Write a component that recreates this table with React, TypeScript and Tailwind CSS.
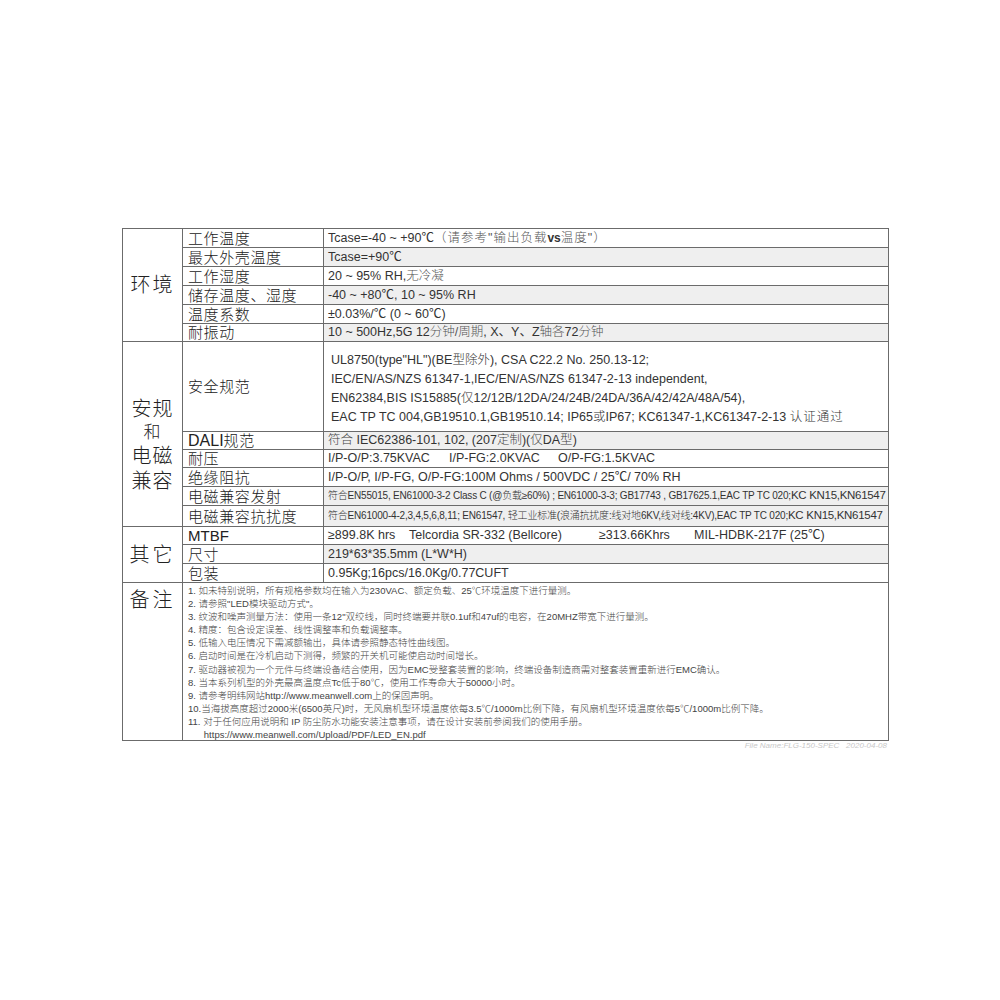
import React from "react";

const B = "border-[#6b6b6b]";

type RowProps = {
  label: React.ReactNode;
  children: React.ReactNode;
  gray?: boolean;
  h?: string;
  labelClass?: string;
};

function Row({ label, children, gray, h = "h-[19px]", labelClass = "" }: RowProps) {
  return (
    <div className={`flex ${h} border-b ${B}`}>
      <div
        className={`w-[141px] shrink-0 border-r ${B} flex items-center pl-[5px] text-[15px] leading-none text-[#222] font-light tracking-[0.6px] ${labelClass}`}
      >
        {label}
      </div>
      <div
        className={`flex-1 min-w-0 flex items-center pl-[4px] text-[12.5px] leading-none text-[#333] whitespace-nowrap overflow-hidden ${
          gray ? "bg-[#efefef]" : "bg-white"
        }`}
      >
        {children}
      </div>
    </div>
  );
}

function Section({
  title,
  children,
  titleClass = "items-center",
}: {
  title: React.ReactNode;
  children: React.ReactNode;
  titleClass?: string;
}) {
  return (
    <div className="flex">
      <div
        className={`w-[60px] shrink-0 border-r border-b ${B} flex justify-center text-[20px] text-[#222] font-light ${titleClass}`}
      >
        {title}
      </div>
      <div className="flex-1 flex flex-col min-w-0">{children}</div>
    </div>
  );
}

const notes = [
  "1. 如未特别说明，所有规格参数均在输入为230VAC、额定负载、25℃环境温度下进行量测。",
  "2. 请参照\"LED模块驱动方式\"。",
  "3. 纹波和噪声测量方法：使用一条12\"双绞线，同时终端要并联0.1uf和47uf的电容，在20MHZ带宽下进行量测。",
  "4. 精度：包含设定误差、线性调整率和负载调整率。",
  "5. 低输入电压情况下需减额输出，具体请参照静态特性曲线图。",
  "6. 启动时间是在冷机启动下测得，频繁的开关机可能使启动时间增长。",
  "7. 驱动器被视为一个元件与终端设备结合使用，因为EMC受整套装置的影响，终端设备制造商需对整套装置重新进行EMC确认。",
  "8. 当本系列机型的外壳最高温度点Tc低于80℃，使用工作寿命大于50000小时。",
  "9. 请参考明纬网站http://www.meanwell.com上的保固声明。",
  "10.当海拔高度超过2000米(6500英尺)时，无风扇机型环境温度依每3.5℃/1000m比例下降，有风扇机型环境温度依每5℃/1000m比例下降。",
  "11. 对于任何应用说明和 IP 防尘防水功能安装注意事项，请在设计安装前参阅我们的使用手册。",
  "      https://www.meanwell.com/Upload/PDF/LED_EN.pdf",
];

export default function App() {
  return (
    <div className="min-h-[1000px] bg-white pt-[228px] pl-[122px] font-['Liberation_Sans','Noto_Sans_CJK_SC',sans-serif]">
      <div className={`w-[767px] border-t border-l border-r ${B} bg-white`}>
        <Section title={<span className="tracking-[2px]">环境</span>}>
          <Row label="工作温度">
            Tcase=-40 ~ +90℃<span className="font-light text-[#555] tracking-[1px]">（请参考"输出负载</span>
            <span className="font-bold text-[12px]">vs</span>
            <span className="font-light text-[#555] tracking-[1px]">温度"）</span>
          </Row>
          <Row label="最大外壳温度" gray>
            Tcase=+90℃
          </Row>
          <Row label="工作湿度">
            20 ~ 95% RH,<span className="font-light text-[#555]">无冷凝</span>
          </Row>
          <Row label="储存温度、湿度" gray>
            -40 ~ +80℃, 10 ~ 95% RH
          </Row>
          <Row label="温度系数">±0.03%/℃ (0 ~ 60℃)</Row>
          <Row label="耐振动" gray h="h-[18px]">
            10 ~ 500Hz,5G 12<span className="font-light text-[#555]">分钟/周期</span>, X、Y、Z<span className="font-light text-[#555]">轴各</span>72<span className="font-light text-[#555]">分钟</span>
          </Row>
        </Section>

        <Section
          title={
            <div className="flex flex-col items-center leading-[25px] tracking-[1px] pt-[55px]">
              <span>安规</span>
              <span className="text-[17px] leading-[22px]">和</span>
              <span>电磁</span>
              <span>兼容</span>
            </div>
          }
          titleClass="items-start"
        >
          <div className={`flex h-[90px] border-b ${B}`}>
            <div
              className={`w-[141px] shrink-0 border-r ${B} flex items-center pl-[5px] text-[15px] leading-none text-[#222] font-light tracking-[0.6px]`}
            >
              安全规范
            </div>
            <div className="flex-1 flex flex-col justify-center pl-[7px] text-[12.5px] leading-[19px] text-[#333] whitespace-nowrap pt-[4px]">
              <div>
                UL8750(type"HL")(BE<span className="font-light">型除外</span>), CSA C22.2 No. 250.13-12;
              </div>
              <div>IEC/EN/AS/NZS 61347-1,IEC/EN/AS/NZS 61347-2-13 independent,</div>
              <div>
                EN62384,BIS IS15885(<span className="font-light">仅</span>12/12B/12DA/24/24B/24DA/36A/42/42A/48A/54),
              </div>
              <div>
                EAC TP TC 004,GB19510.1,GB19510.14; IP65<span className="font-light">或</span>IP67; KC61347-1,KC61347-2-13{" "}
                <span className="font-light tracking-[1px]">认证通过</span>
              </div>
            </div>
          </div>
          <Row
            label={
              <>
                <span className="text-[16px] tracking-normal font-normal">DALI</span>规范
              </>
            }
            gray
            h="h-[18px]"
          >
            <span className="font-light text-[#444]">符合</span>&nbsp;IEC62386-101, 102, (207
            <span className="font-light text-[#444]">定制</span>)(<span className="font-light text-[#444]">仅</span>DA
            <span className="font-light text-[#444]">型</span>)
          </Row>
          <Row label="耐压" h="h-[18px]">
            <span className="w-[121px]">I/P-O/P:3.75KVAC</span>
            <span className="w-[109px]">I/P-FG:2.0KVAC</span>
            <span>O/P-FG:1.5KVAC</span>
          </Row>
          <Row label="绝缘阻抗">I/P-O/P, I/P-FG, O/P-FG:100M Ohms / 500VDC / 25℃/ 70% RH</Row>
          <Row label="电磁兼容发射" gray>
            <span className="text-[10px] tracking-[-0.2px]">
              <span className="font-light">符合</span>EN55015, EN61000-3-2 Class C (@<span className="font-light">负载</span>≥60%) ; EN61000-3-3; GB17743 , GB17625.1,EAC TP TC 020;
              <span className="text-[11.5px] tracking-[-0.3px]">KC KN15,KN61547</span>
            </span>
          </Row>
          <Row label="电磁兼容抗扰度" gray h="h-[21px]">
            <span className="text-[10px] tracking-[-0.2px]">
              <span className="font-light">符合</span>EN61000-4-2,3,4,5,6,8,11; EN61547,{" "}
              <span className="font-light">轻工业标准(浪涌抗扰度:线对地</span>6KV,<span className="font-light">线对线</span>:4KV),EAC TP TC 020;
              <span className="text-[11.5px] tracking-[-0.3px]">KC KN15,KN61547</span>
            </span>
          </Row>
        </Section>

        <Section title={<span className="tracking-[3px]">其它</span>}>
          <Row label={<span className="tracking-normal font-normal text-[15px]">MTBF</span>} h="h-[18px]">
            <span className="w-[81px]">≥899.8K hrs</span>
            <span className="w-[190px]">Telcordia SR-332 (Bellcore)</span>
            <span className="w-[95px]">≥313.66Khrs</span>
            <span>MIL-HDBK-217F (25℃)</span>
          </Row>
          <Row label="尺寸" gray h="h-[19px]">
            219*63*35.5mm (L*W*H)
          </Row>
          <Row label="包装">0.95Kg;16pcs/16.0Kg/0.77CUFT</Row>
        </Section>

        <Section title={<span className="tracking-[3px] pt-[2px]">备注</span>} titleClass="items-start">
          <div className={`h-[158px] border-b ${B} pl-[5px] pt-[1px] text-[9.5px] leading-[13.1px] text-[#444] whitespace-pre font-light`}>
            {notes.map((n, i) => (
              <div key={i}>{n}</div>
            ))}
          </div>
        </Section>
      </div>
      <div className="w-[767px] text-right pr-[2px] text-[8px] italic text-[#c8c8c8] leading-[9px]">
        File Name:FLG-150-SPEC&nbsp;&nbsp;&nbsp;2020-04-08
      </div>
    </div>
  );
}
